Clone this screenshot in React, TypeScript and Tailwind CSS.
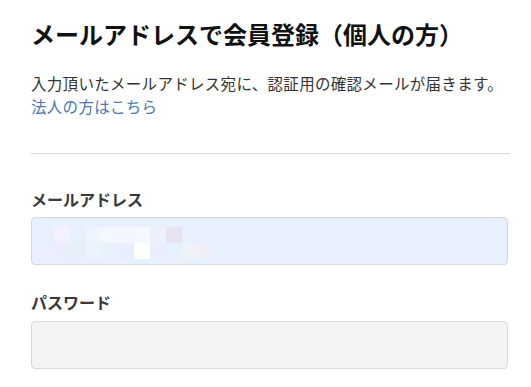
import React from "react";

const row1 = ["#f5f0fd", "#e6f1fd", "#edf6fe", "#f3f7fe", "#f3f6fe", "#f5f9ff", "#ecf0fd", "#e7e3ee", "#e7f0fc", "#e8f0fe"];
const row2 = ["#ebeefa", "#e6eefa", "#ebf3fd", "#e6f2fa", "#e8eefd", "#ffffff", "#ebecfc", "#e5f2fd", "#f0f2fa", "#eeeff8"];

export default function App() {
  return (
    <div
      className="w-[531px] h-[387px] bg-white overflow-hidden pl-[31px] pr-[23px]"
      style={{ fontFamily: '"Noto Sans CJK JP", "Noto Sans", sans-serif' }}
    >
      <h1 className="pt-[18px] text-[24px] leading-[32px] font-bold text-[#111]">
        メールアドレスで会員登録（個人の方）
      </h1>
      <p className="mt-[22px] text-[15.5px] leading-[23px] text-[#333] tracking-[0.3px] whitespace-nowrap">
        入力頂いたメールアドレス宛に、認証用の確認メールが届きます。
        <br />
        <a className="text-[#4a78b5]">法人の方はこちら</a>
      </p>
      <div className="mt-[35px] h-px bg-[#d9d9d9] mr-[-2px]" />
      <div className="mt-[34px]">
        <label className="block text-[16px] leading-[22px] font-bold text-[#3a3a3a]">メールアドレス</label>
        <div className="mt-[7px] h-[48px] rounded-[4px] border border-[#d4d8de] bg-[#e8f0fe] pl-[22px] pt-[9px]">
          <div className="flex">
            {row1.map((c, i) => (
              <div key={i} className="w-[16px] h-[16px]" style={{ backgroundColor: c }} />
            ))}
          </div>
          <div className="flex">
            {row2.map((c, i) => (
              <div key={i} className="w-[16px] h-[16px]" style={{ backgroundColor: c }} />
            ))}
          </div>
        </div>
      </div>
      <div className="mt-[26px]">
        <label className="block text-[16px] leading-[22px] font-bold text-[#3a3a3a]">パスワード</label>
        <div className="mt-[8px] h-[48px] rounded-[4px] border border-[#d9d9d9] bg-[#f3f3f3]" />
      </div>
    </div>
  );
}
